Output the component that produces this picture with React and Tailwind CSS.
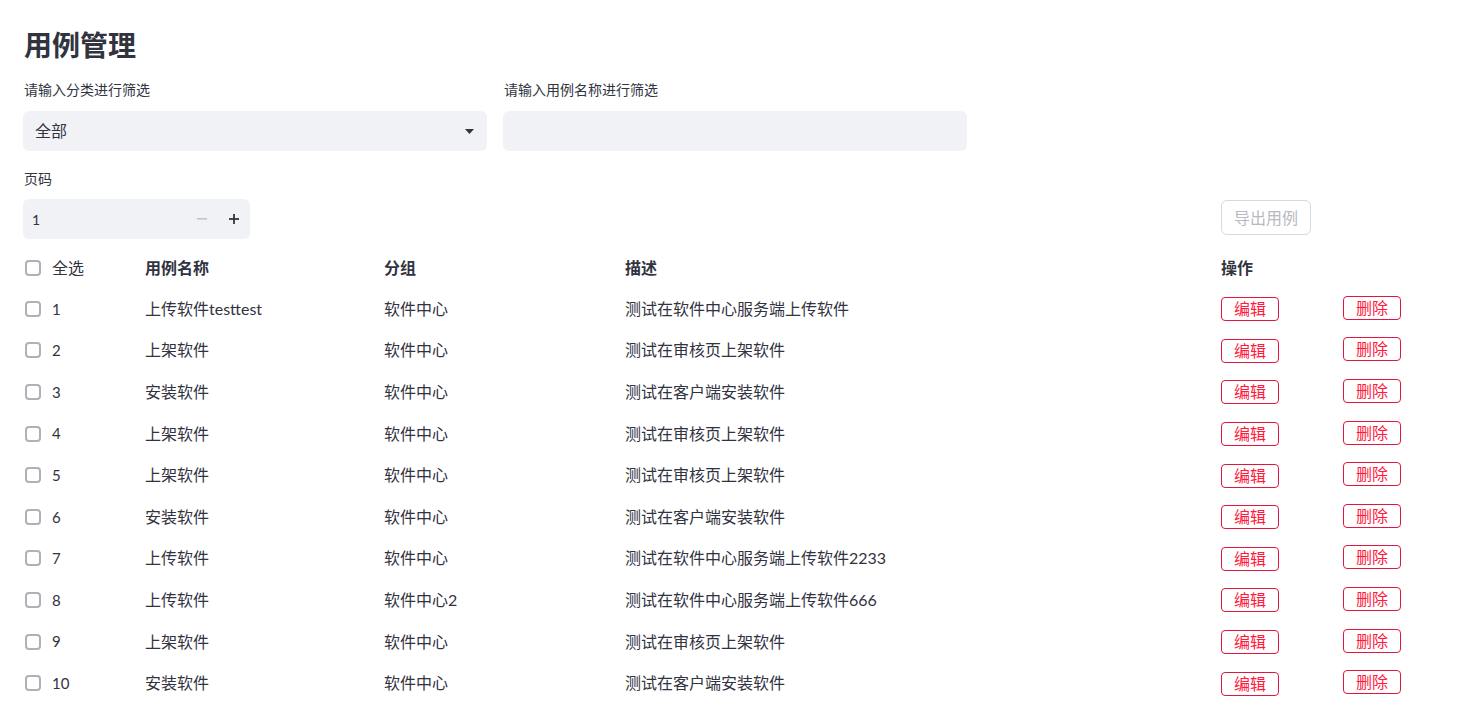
import React from 'react';

const rows = [
  ['1', '上传软件testtest', '软件中心', '测试在软件中心服务端上传软件'],
  ['2', '上架软件', '软件中心', '测试在审核页上架软件'],
  ['3', '安装软件', '软件中心', '测试在客户端安装软件'],
  ['4', '上架软件', '软件中心', '测试在审核页上架软件'],
  ['5', '上架软件', '软件中心', '测试在审核页上架软件'],
  ['6', '安装软件', '软件中心', '测试在客户端安装软件'],
  ['7', '上传软件', '软件中心', '测试在软件中心服务端上传软件2233'],
  ['8', '上传软件', '软件中心2', '测试在软件中心服务端上传软件666'],
  ['9', '上架软件', '软件中心', '测试在审核页上架软件'],
  ['10', '安装软件', '软件中心', '测试在客户端安装软件'],
];

const grid = 'grid grid-cols-[122px_239px_241px_596px_122px_1fr] items-center';

function Box() {
  return <span className="w-4 h-4 rounded-[4px] border-2 border-[#afb1b8] bg-white shrink-0" />;
}

function RedButton({ children, up }) {
  return (
    <button
      className={`w-[58px] h-6 rounded-[4px] border border-[#e2173e] text-[#ff1a3c] text-[16px] leading-none flex items-center justify-center bg-white ${up ? 'mb-[2px]' : 'mt-[1px]'}`}
    >
      {children}
    </button>
  );
}

export default function App() {
  return (
    <div
      className="bg-white text-[#31333F] min-h-[709px] pl-[23px] pt-[24px]"
      style={{ fontFamily: 'Lato, "Noto Sans CJK SC", sans-serif' }}
    >
      <h1 className="text-[28px] font-bold leading-[42px] ml-px">用例管理</h1>

      <div className="flex gap-4 mt-[14px]">
        <div className="w-[464px]">
          <div className="text-[14px] leading-5 ml-px">请输入分类进行筛选</div>
          <div className="mt-[11px] h-10 rounded-[6px] bg-[#f0f2f6] flex items-center justify-between pl-3 pr-[13px]">
            <span className="text-[16px]">全部</span>
            <svg width="9" height="5" viewBox="0 0 9 5">
              <path d="M0 0h9L4.5 5z" fill="#31333F" />
            </svg>
          </div>
        </div>
        <div className="w-[464px]">
          <div className="text-[14px] leading-5 ml-px">请输入用例名称进行筛选</div>
          <div className="mt-[11px] h-10 rounded-[6px] bg-[#f0f2f6]" />
        </div>
      </div>

      <div className="flex items-start mt-[18px]">
        <div className="w-[227px]">
          <div className="text-[14px] leading-5 ml-px">页码</div>
          <div className="mt-[10px] h-10 rounded-[6px] bg-[#f0f2f6] flex items-center">
            <span className="flex-1 pl-[9px] text-[14px]">1</span>
            <span className="w-8 flex items-center justify-center text-[#c3c5cb]">
              <svg width="10" height="2" viewBox="0 0 10 2"><rect width="10" height="1.6" fill="currentColor" /></svg>
            </span>
            <span className="w-8 flex items-center justify-center">
              <svg width="10" height="10" viewBox="0 0 10 10">
                <rect x="0" y="4.1" width="10" height="1.8" fill="#31333F" />
                <rect x="4.1" y="0" width="1.8" height="10" fill="#31333F" />
              </svg>
            </span>
          </div>
        </div>
        <button
          disabled
          className="ml-[971px] mt-[31px] w-[90px] h-[35px] rounded-[6px] border border-[#d9d9dd] text-[#b8bac0] text-[16px] bg-white"
        >
          导出用例
        </button>
      </div>

      <div className={`${grid} h-10 mt-[9px] text-[16px]`}>
        <div className="flex items-center gap-[11px] pl-[2px]">
          <Box />
          <span>全选</span>
        </div>
        <div className="font-bold">用例名称</div>
        <div className="font-bold">分组</div>
        <div className="font-bold">描述</div>
        <div className="font-bold">操作</div>
        <div />
      </div>

      {rows.map((r) => (
        <div key={r[0]} className={`${grid} h-[41.6px] text-[16px]`}>
          <div className="flex items-center gap-[11px] pl-[2px]">
            <Box />
            <span className="text-[15px]">{r[0]}</span>
          </div>
          <div>{r[1]}</div>
          <div>{r[2]}</div>
          <div>{r[3]}</div>
          <div className="flex">
            <RedButton>编辑</RedButton>
          </div>
          <div className="flex">
            <RedButton up>删除</RedButton>
          </div>
        </div>
      ))}
    </div>
  );
}
